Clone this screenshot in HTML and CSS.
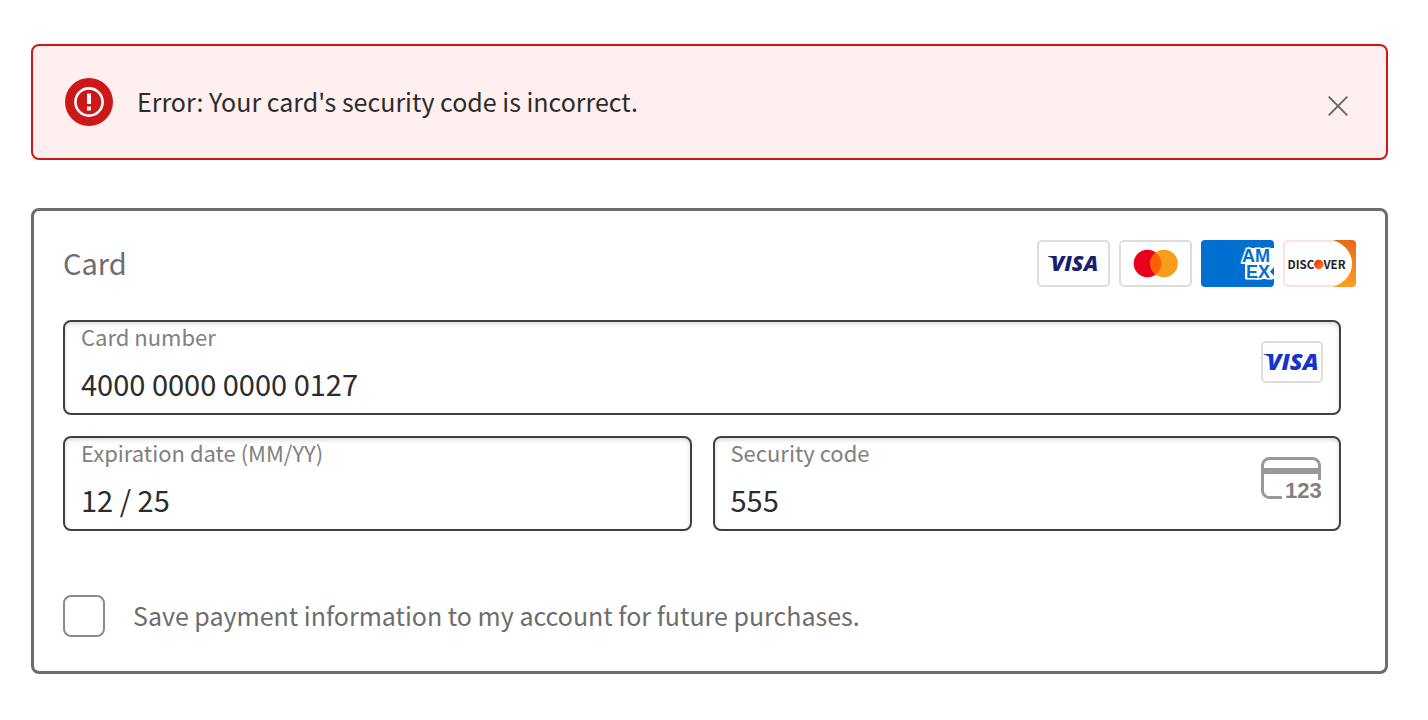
FILE: index.html
```
<!DOCTYPE html>
<html lang="en">
<head>
    <meta charset="UTF-8">
    <meta name="viewport" content="width=device-width, initial-scale=1.0">
    <title>Payment</title>
    <link rel="stylesheet" href="styles.css">
</head>
<body>
    <main>
        <div class="alert" role="alert">
            <svg class="alert-icon" viewBox="0 0 48 48" aria-hidden="true">
                <circle cx="24" cy="24" r="24" fill="#cc1818"/>
                <circle cx="24" cy="24" r="13.6" fill="none" stroke="#fff" stroke-width="2.6"/>
                <path d="M22 15.500h4v10.500h-4zM22 28.500h4v4h-4z" fill="#fff"/>
            </svg>
            <p class="alert-text">Error: Your card's security code is incorrect.</p>
            <button class="alert-close" type="button" aria-label="Dismiss">
                <svg viewBox="0 0 20 20"><path d="M.7.7l18.6 18.6M19.3.7L.7 19.3" stroke="#666" stroke-width="1.9"/></svg>
            </button>
        </div>

        <form class="card">
            <div class="card-header">
                <h2>Card</h2>
                <div class="brands">
                    <svg class="brand" viewBox="0 0 73 47" role="img" aria-label="Visa">
                        <rect x="1" y="1" width="71" height="45" rx="4" fill="#fff" stroke="#ddd" stroke-width="2"/>
                        <path d="M11 16h7l1.500 7c-1.500-3.400-4-5.400-8.500-6.400z" fill="#191e70"/>
                        <text class="visa-text" x="14" y="31" font-size="21.500" fill="#191e70">VISA</text>
                    </svg>
                    <svg class="brand" viewBox="0 0 73 47" role="img" aria-label="Mastercard">
                        <rect x="1" y="1" width="71" height="45" rx="4" fill="#fff" stroke="#ddd" stroke-width="2"/>
                        <circle cx="28.500" cy="23.500" r="13.800" fill="#eb001b"/>
                        <circle cx="45" cy="23.500" r="13.800" fill="#f79e1b"/>
                        <path d="M36.750 12.400a13.800 13.800 0 0 1 0 22.200a13.800 13.800 0 0 1 0-22.200z" fill="#ff5f00"/>
                    </svg>
                    <svg class="brand" viewBox="0 0 73 47" role="img" aria-label="American Express">
                        <clipPath id="amexClip"><rect width="73" height="47" rx="4"/></clipPath>
                        <g clip-path="url(#amexClip)">
                            <rect width="73" height="47" fill="#016fd0"/>
                            <path d="M45 8H73V39H44V24H40z" fill="#fff"/>
                            <text class="amex-text" x="41" y="21.500" font-size="18">AM</text>
                            <text class="amex-text" x="45" y="37.500" font-size="18">EX</text>
                            <path d="M73 27v9l-4-4.500z" fill="#016fd0"/>
                        </g>
                    </svg>
                    <svg class="brand" viewBox="0 0 73 47" role="img" aria-label="Discover">
                        <defs>
                            <linearGradient id="discoverBg" x1="0" y1="0" x2="0" y2="1">
                                <stop offset="0" stop-color="#e8681a"/>
                                <stop offset="1" stop-color="#f9a020"/>
                            </linearGradient>
                            <linearGradient id="discoverDot" x1="0" y1="0" x2="1" y2="1">
                                <stop offset="0" stop-color="#e6291c"/>
                                <stop offset="1" stop-color="#fd8a1c"/>
                            </linearGradient>
                            <clipPath id="discoverClip"><rect width="73" height="47" rx="4"/></clipPath>
                        </defs>
                        <g clip-path="url(#discoverClip)">
                            <rect width="73" height="47" fill="#fff"/>
                            <rect x="1" y="1" width="71" height="45" rx="4" fill="none" stroke="#f8e4da" stroke-width="2"/>
                            <path d="M50 0H73V47H50C62 43 69 34 69 23.500C69 13 62 4 50 0z" fill="url(#discoverBg)"/>
                        </g>
                        <text class="discover-text" x="4.500" y="29" font-size="11.500">DISC</text>
                        <circle cx="35.800" cy="24.500" r="4.700" fill="url(#discoverDot)"/>
                        <text class="discover-text" x="40.500" y="29" font-size="11.500">VER</text>
                    </svg>
                </div>
            </div>

            <div class="fields">
                <div class="field field-wide">
                    <div class="field-body">
                        <label for="number">Card number</label>
                        <input id="number" type="text" value="4000 0000 0000 0127">
                    </div>
                    <svg class="field-icon" viewBox="0 0 62 42" role="img" aria-label="Visa">
                        <rect x="1" y="1" width="60" height="40" rx="4" fill="#fff" stroke="#ddd" stroke-width="2"/>
                        <path d="M2.500 13h8l1.500 7.500c-1.500-3.600-4.500-5.800-9.500-6.900z" fill="#1434cb"/>
                        <text class="visa-text" x="6" y="29" font-size="23.500" fill="#1434cb">VISA</text>
                    </svg>
                </div>
                <div class="field">
                    <div class="field-body">
                        <label for="expiry">Expiration date (MM/YY)</label>
                        <input id="expiry" type="text" value="12 / 25">
                    </div>
                </div>
                <div class="field">
                    <div class="field-body">
                        <label for="cvc">Security code</label>
                        <input id="cvc" type="text" value="555">
                    </div>
                    <svg class="field-icon" viewBox="0 0 62 42" aria-hidden="true">
                        <path d="M21 40.500H8.500a7 7 0 0 1-7-7v-25a7 7 0 0 1 7-7h43a7 7 0 0 1 7 7V23" fill="none" stroke="#999" stroke-width="3"/>
                        <path d="M1 11h58v6H1z" fill="#999"/>
                        <text class="cvc-text" x="24" y="41" font-size="22">123</text>
                    </svg>
                </div>
            </div>

            <label class="save">
                <input type="checkbox">
                <span>Save payment information to my account for future purchases.</span>
            </label>
        </form>
    </main>
</body>
</html>
```
FILE: styles.css
```
* {
    box-sizing: border-box;
}

body {
    margin: 0;
    background: #fff;
    color: #2c2c2c;
    font-family: "Noto Sans CJK SC", "Open Sans", sans-serif;
}

main {
    padding: 44px 40px 44px 31px;
}

.alert {
    display: flex;
    align-items: center;
    gap: 24px;
    padding: 32px 34px 32px 32px;
    margin-bottom: 48px;
    border: 2px solid #cc1818;
    border-radius: 8px;
    background: #fff0ef;
}

.alert-icon {
    flex: none;
    width: 48px;
    height: 48px;
}

.alert-text {
    flex: 1;
    margin: 0;
    padding-bottom: 2px;
    font-size: 25px;
    line-height: 46px;
}

.alert-close {
    display: flex;
    padding: 4px;
    margin-top: 8px;
    border: 0;
    background: none;
    cursor: pointer;
}

.alert-close svg {
    width: 20px;
    height: 20px;
}

.card {
    padding: 29px 29px 34px;
    border: 3px solid #6d6d6d;
    border-radius: 8px;
}

.card-header {
    display: flex;
    align-items: flex-start;
    justify-content: space-between;
    margin-bottom: 33px;
}

h2 {
    margin: 0;
    color: #6d6d6d;
    font-size: 29px;
    font-weight: 400;
    line-height: 44px;
}

.brands {
    display: flex;
    gap: 9px;
}

.brand {
    width: 73px;
    height: 47px;
}

.visa-text {
    font-family: "Open Sans", sans-serif;
    font-style: italic;
    font-weight: 800;
}

.amex-text {
    font-family: "Liberation Sans", sans-serif;
    font-weight: 700;
    fill: #016fd0;
    stroke: #fff;
    stroke-width: 3px;
    paint-order: stroke;
}

.discover-text {
    font-family: "Noto Sans CJK SC", sans-serif;
    font-weight: 700;
    fill: #222;
}

.cvc-text {
    font-family: "Liberation Sans", sans-serif;
    font-weight: 700;
    fill: #808080;
}

.fields {
    display: grid;
    grid-template-columns: 1fr 1fr;
    gap: 21px;
    padding-right: 15px;
}

.field {
    display: flex;
    align-items: flex-start;
    min-width: 0;
    padding: 0 16px;
    border: 2px solid #404040;
    border-radius: 8px;
    box-shadow: inset 0 2px 4px rgba(0, 0, 0, 0.15);
}

.field-wide {
    grid-column: 1 / -1;
}

.field-body {
    flex: 1;
    min-width: 0;
    padding-bottom: 7px;
}

.field label {
    display: block;
    color: #808080;
    font-size: 22px;
    line-height: 28px;
}

.field input {
    display: block;
    width: 100%;
    height: 56px;
    margin: 0;
    padding: 9px 0 0;
    border: 0;
    outline: 0;
    background: none;
    color: #2c2c2c;
    font-family: inherit;
    font-size: 29px;
}

.field-icon {
    flex: none;
    width: 62px;
    height: 42px;
    margin-top: 19px;
    overflow: visible;
}

.save {
    display: flex;
    align-items: center;
    gap: 28px;
    margin-top: 64px;
    color: #6d6d6d;
    font-size: 25px;
    line-height: 40px;
}

.save span {
    padding-bottom: 2px;
}

.save input {
    flex: none;
    width: 42px;
    height: 42px;
    margin: 0;
    border: 2px solid #8c8c88;
    border-radius: 8px;
    background: #fff;
    appearance: none;
}

.save input:checked {
    background: #6d6d6d;
}
```
